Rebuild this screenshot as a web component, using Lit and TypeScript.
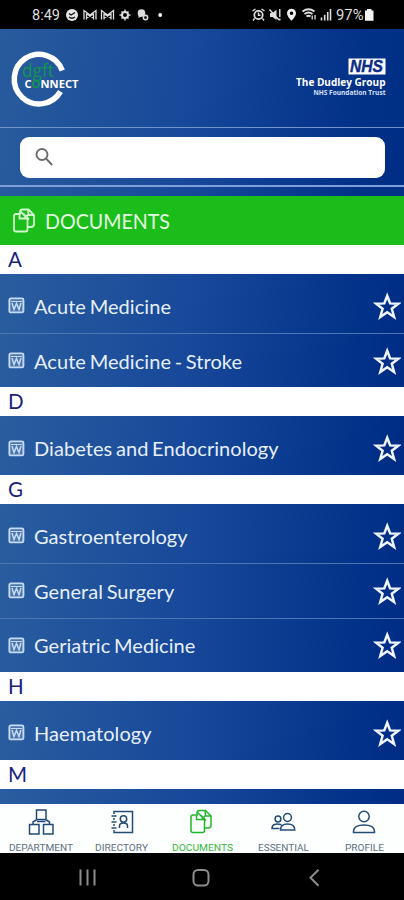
import { LitElement, html, css, svg } from "lit";
import { customElement } from "lit/decorators.js";

interface Section { letter: string; items: string[]; }

const SECTIONS: Section[] = [
  { letter: "A", items: ["Acute Medicine", "Acute Medicine - Stroke"] },
  { letter: "D", items: ["Diabetes and Endocrinology"] },
  { letter: "G", items: ["Gastroenterology", "General Surgery", "Geriatric Medicine"] },
  { letter: "H", items: ["Haematology"] },
  { letter: "M", items: [] },
];

const documentsShape = svg`
  <path d="M7.500 6H4Q2 6 2 8V21.500Q2 23.500 4 23.500H13.500Q15.500 23.500 15.500 21.500V10L11.500 6"/>
  <path d="M8 7V4Q8 1.500 10.500 1.500H16.500L22 7V16Q22 19 19 19H16"/>
  <path d="M16 1.500L16.500 7H22M8.500 3.500L17 11.500M7.500 7V10.500H15M17 6L12 11"/>`;

const TABS = [
  { label: "DEPARTMENT", width: 64, icon: svg`
    <path d="M8.500 1H18V10.500H8.500ZM1.500 15.500H11V25H1.500ZM15.500 15.500H25V25H15.500ZM9 10.500L5 13V15.500M17.500 10.500L21.500 13V15.500M9 12.500H17.500"/>` },
  { label: "DIRECTORY", width: 53, icon: svg`
    <path d="M5 5V2.500H23.500V23.500H5V21M5 9V11M5 15V17M2.500 7H7.500M2.500 13H7.500M2.500 19H7.500"/>
    <circle cx="14.500" cy="10" r="3.200"/>
    <path d="M10.500 19V17Q10.500 14 14.500 14Q18.500 14 18.500 17V19"/>` },
  { label: "DOCUMENTS", width: 61, icon: documentsShape, active: true },
  { label: "ESSENTIAL", width: 51, icon: svg`
    <circle cx="17.500" cy="8.500" r="3.900"/><circle cx="8" cy="10" r="2.900"/>
    <path d="M10.500 21Q10.500 15 17.500 15Q24.800 15 24.800 21ZM11.500 15.700Q2 13.500 2 19.500H9.500"/>` },
  { label: "PROFILE", width: 39, icon: svg`
    <circle cx="13" cy="7.500" r="5.200"/>
    <path d="M2.500 23.500V22Q3 16 13 16Q23 16 23.500 22V23.500Z"/>` },
];

@customElement("status-bar")
class StatusBar extends LitElement {
  static styles = css`
    :host { display: block; height: 29px; background: #000; color: #dedede; }
    svg { display: block; }
    text { font-family: Roboto, "Open Sans", sans-serif; font-size: 14.500px; fill: #dedede; }
  `;
  render() {
    return html`<svg width="404" height="29" viewBox="0 0 404 29" fill="none" stroke="#dedede" stroke-width="1.400">
      <text x="32" y="20.300" textLength="28" lengthAdjust="spacingAndGlyphs" stroke="none">8:49</text>
      <circle cx="72" cy="15" r="6" fill="#e6e6e6" stroke="none"/>
      <path d="M69 13.500L71 15L75 12.500M69 17Q72 19.500 75 17" stroke="#111"/>
      <path d="M84 19.500V10.500L90 15L96 10.500V19.500M86.500 19.500V14L93.500 18M93.500 19.500V14L86.500 18" stroke-width="1.300"/>
      <path d="M101.500 19.500V10.500L107.500 15L113.500 10.500V19.500M104 19.500V14L111 18M111 19.500V14L104 18" stroke-width="1.300"/>
      <circle cx="125" cy="15" r="3" stroke-width="2"/>
      <path d="M125 9.500V12M125 18V20.500M119.500 15H122M128 15H130.500M121.500 11.500L123 13M127 17L128.500 18.500M121.500 18.500L123 17M127 13L128.500 11.500"/>
      <circle cx="141.500" cy="13" r="3.800" fill="#dedede" stroke="none"/>
      <path d="M138.500 14.500V18L142 16" fill="#dedede" stroke="none"/>
      <circle cx="145.500" cy="17.500" r="2.200" fill="#222"/>
      <circle cx="160.200" cy="15" r="1.900" fill="#fff" stroke="none"/>
      <circle cx="258.500" cy="15" r="4.200" stroke-width="1.800"/>
      <path d="M258.500 12.500V15.200H260.500M252.500 11L255.500 9M264.500 11L261.500 9M254.500 18.500L253 20.500M262.500 18.500L264 20.500"/>
      <path d="M270 13H272.500L276.500 9.800V20L272.500 17H270Z" fill="#dedede" stroke="none"/>
      <path d="M269.500 9.500L279 20M279.800 9V17M279.800 18.500V20.500"/>
      <path d="M291.500 8.800A4.500 4.500 0 0 0 287 13.300C287 16.500 291.500 20.700 291.500 20.700S296 16.500 296 13.300A4.500 4.500 0 0 0 291.500 8.800ZM291.500 11.500A1.800 1.800 0 1 1 291.500 15.100A1.800 1.800 0 0 1 291.500 11.500Z" fill="#eee" fill-rule="evenodd" stroke="none"/>
      <path d="M302.500 11.500Q308.500 7 314.500 11.500M304.500 14Q308.500 11 312.500 14M306.500 16.500Q308.500 15 310.500 16.500" stroke-width="1.900"/>
      <path d="M312.200 19.500V15.500M315 15V19.500" stroke-width="1.300"/>
      <path d="M321.500 20.500V17.500M324.700 20.500V14.700M327.700 20.500V12M330.500 20.500V9" stroke-width="1.600"/>
      <text x="336" y="20.300" textLength="27.500" lengthAdjust="spacingAndGlyphs" stroke="none">97%</text>
      <path d="M367 9H371.500V10.500H373.500V20.700H365V10.500H367Z" fill="#f4f4f4" stroke="none"/>
    </svg>`;
  }
}

@customElement("app-header")
class AppHeader extends LitElement {
  static styles = css`
    :host { display: block; height: 98px; background: linear-gradient(97deg, #285b9d 0%, #18499a 45%, #013087 90%, #002f86 100%); }
    .row { display: flex; justify-content: space-between; height: 98px; }
    svg { display: block; }
    .connect { font: 700 10.500px "Open Sans", sans-serif; fill: #fff; }
    .dgft { font: 400 18px "Open Sans", sans-serif; fill: #12964f; }
    .nhs { font: italic 700 16.500px "Liberation Sans", sans-serif; fill: #0b2d87; stroke: #0b2d87; stroke-width: .4; }
    .group { font: 700 10px "Open Sans", sans-serif; fill: #fff; }
    .trust { font: 700 6.500px "Open Sans", sans-serif; fill: #d5e0f5; }
  `;
  render() {
    return html`<div class="row">
      <svg width="100" height="98" viewBox="0 0 100 98">
        <path d="M62.300 41.500A24.800 24.800 0 1 0 60.500 62.500" fill="none" stroke="#fff" stroke-width="5.500"/>
        <text class="dgft" x="22" y="47.500" textLength="32" lengthAdjust="spacingAndGlyphs">dgft</text>
        <text class="connect" x="24.500" y="58.500" textLength="54" lengthAdjust="spacingAndGlyphs">C<tspan fill="#12964f">O</tspan>NNECT</text>
      </svg>
      <svg width="120" height="98" viewBox="0 0 120 98">
        <rect x="64.500" y="29.500" width="37" height="16" fill="#fff"/>
        <text class="nhs" x="66" y="43.400" textLength="33" lengthAdjust="spacingAndGlyphs">NHS</text>
        <text class="group" x="12" y="57" textLength="89.500" lengthAdjust="spacingAndGlyphs">The Dudley Group</text>
        <text class="trust" x="29.500" y="65.500" textLength="72" lengthAdjust="spacingAndGlyphs">NHS Foundation Trust</text>
      </svg>
    </div>`;
  }
}

@customElement("search-bar")
class SearchBar extends LitElement {
  static styles = css`
    :host { display: block; box-sizing: border-box; height: 60px; padding: 9px 19px 7px 20px; border-top: 1px solid #7593c9; border-bottom: 2px solid #7f9fda;
      background: linear-gradient(92deg, #285a9d 0%, #18499a 45%, #013087 90%, #002d85 100%); }
    .field { box-sizing: border-box; height: 41px; border-radius: 9px; background: #fff; padding: 11px 15px; }
    svg { display: block; }
  `;
  render() {
    return html`<div class="field">
      <svg width="18" height="18" viewBox="0 0 18 18" fill="none" stroke="#6d6d6d" stroke-width="1.900"><circle cx="7" cy="6.500" r="5.500"/><path d="M11 10.500L17.200 17"/></svg>
    </div>`;
  }
}

@customElement("document-row")
class DocumentRow extends LitElement {
  static properties = { label: {} };
  declare label: string;
  static styles = css`
    :host { display: flex; align-items: center; height: 54.400px; box-sizing: border-box; padding: 0 3px 0 8px; }
    .word { flex: none; width: 17px; height: 17px; margin-right: 9px; }
    .label { flex: 1; font: 400 20px/26px Lato, sans-serif; letter-spacing: .06px; word-spacing: -1.500px; color: #e6effb; white-space: nowrap; }
    .star { flex: none; width: 28px; height: 28px; }
    svg { display: block; }
  `;
  render() {
    return html`
      <svg class="word" viewBox="0 0 17 17" fill="none" stroke="#c6daf1"><rect x="1.400" y="1.400" width="14" height="14" rx="1.500" fill="#4a76b0" stroke-width="1.900"/><path d="M3 4.500H14" stroke-width="1"/><path d="M4 6L6 12.500L8.500 6.500L11 12.500L13 6" stroke-width="1.500"/></svg>
      <span class="label">${this.label}</span>
      <svg class="star" viewBox="0 0 28 28" fill="none" stroke="#f0f4ff" stroke-width="2.500"><path d="M14.200 3.700L17.100 11.400L25.300 11.700L18.800 16.800L21.100 25L14.200 20.300L7.300 25L9.600 16.800L3.100 11.700L11.300 11.400Z"/></svg>`;
  }
}

@customElement("tab-bar")
class TabBar extends LitElement {
  static styles = css`
    :host { display: grid; grid-template-columns: repeat(5, 1fr); height: 48.500px; background: #fdfefe; }
    .tab { display: flex; flex-direction: column; align-items: center; padding: 4.500px 0 0 1px; color: #234b78; }
    .tab.active { color: #20b52a; }
    .icon { width: 26px; height: 26px; display: block; }
    .caption { display: block; height: 14px; margin-top: 5px; }
    text { font: 400 9.700px Roboto, sans-serif; fill: #5b6f82; }
    .active text { fill: #35b73d; }
  `;
  render() {
    return TABS.map((t) => html`<div class="tab ${t.active ? "active" : ""}">
      <svg class="icon" viewBox="0 0 26 26" fill="none" stroke="currentColor" stroke-width="1.500">${t.icon}</svg>
      <svg class="caption" width=${t.width} viewBox="0 0 ${t.width} 14"><text x="0" y="10.500" textLength=${t.width} lengthAdjust="spacingAndGlyphs">${t.label}</text></svg>
    </div>`);
  }
}

@customElement("app-root")
class AppRoot extends LitElement {
  static styles = css`
    :host { display: flex; flex-direction: column; width: 404px; height: 900px; overflow: hidden; background: #000; font-family: Lato, sans-serif; }
    status-bar, app-header, search-bar, tab-bar { flex: none; }
    .gap { flex: none; height: 9.200px; background: linear-gradient(90deg, #285a9d, #18499a 45%, #013087 92%); }
    .title { flex: none; box-sizing: border-box; height: 49px; display: flex; align-items: center; gap: 9px; padding-left: 12px; background: #1bbd1a; }
    .title text { font: 400 21.500px Lato, sans-serif; fill: #e4fbe2; }
    svg { display: block; }
    .list { flex: none; height: 559.300px; overflow: hidden; }
    .letter { box-sizing: border-box; height: 29px; padding-left: 8px; background: #fff; color: #17237d; font: 400 20.500px/29px Lato, sans-serif; }
    .rows { padding-top: 4.500px; background: linear-gradient(97deg, #2a5d9f 0%, #18499a 45%, #013289 88%, #002b84 100%); }
    .rows:last-child { height: 20px; }
    document-row + document-row { border-top: 1px solid #5076b2; }
    .list > .letter:first-child { height: 28.900px; }
    .system { flex: 1; }
  `;
  render() {
    return html`
      <status-bar></status-bar>
      <app-header></app-header>
      <search-bar></search-bar>
      <div class="gap"></div>
      <div class="title">
        <svg width="24" height="25" viewBox="0 0 24 25" fill="none" stroke="#d2f7cd" stroke-width="1.800">${documentsShape}</svg>
        <svg width="140" height="32" viewBox="0 0 140 32"><text x="0" y="23.500" textLength="125" lengthAdjust="spacingAndGlyphs">DOCUMENTS</text></svg>
      </div>
      <div class="list">${SECTIONS.map((s) => html`<div class="letter">${s.letter}</div><div class="rows">${s.items.map((i) => html`<document-row .label=${i}></document-row>`)}</div>`)}</div>
      <tab-bar></tab-bar>
      <div class="system">
        <svg width="404" height="47" viewBox="0 0 404 47" fill="none" stroke="#8d8d8d" stroke-width="2">
          <path d="M80.500 16.500V32.500M87.500 16.500V32.500M94.500 16.500V32.500"/>
          <rect x="193.500" y="17" width="15" height="15.500" rx="4.500"/>
          <path d="M318.500 16.800L310.500 24.800L318.500 32.800"/>
        </svg>
      </div>`;
  }
}
